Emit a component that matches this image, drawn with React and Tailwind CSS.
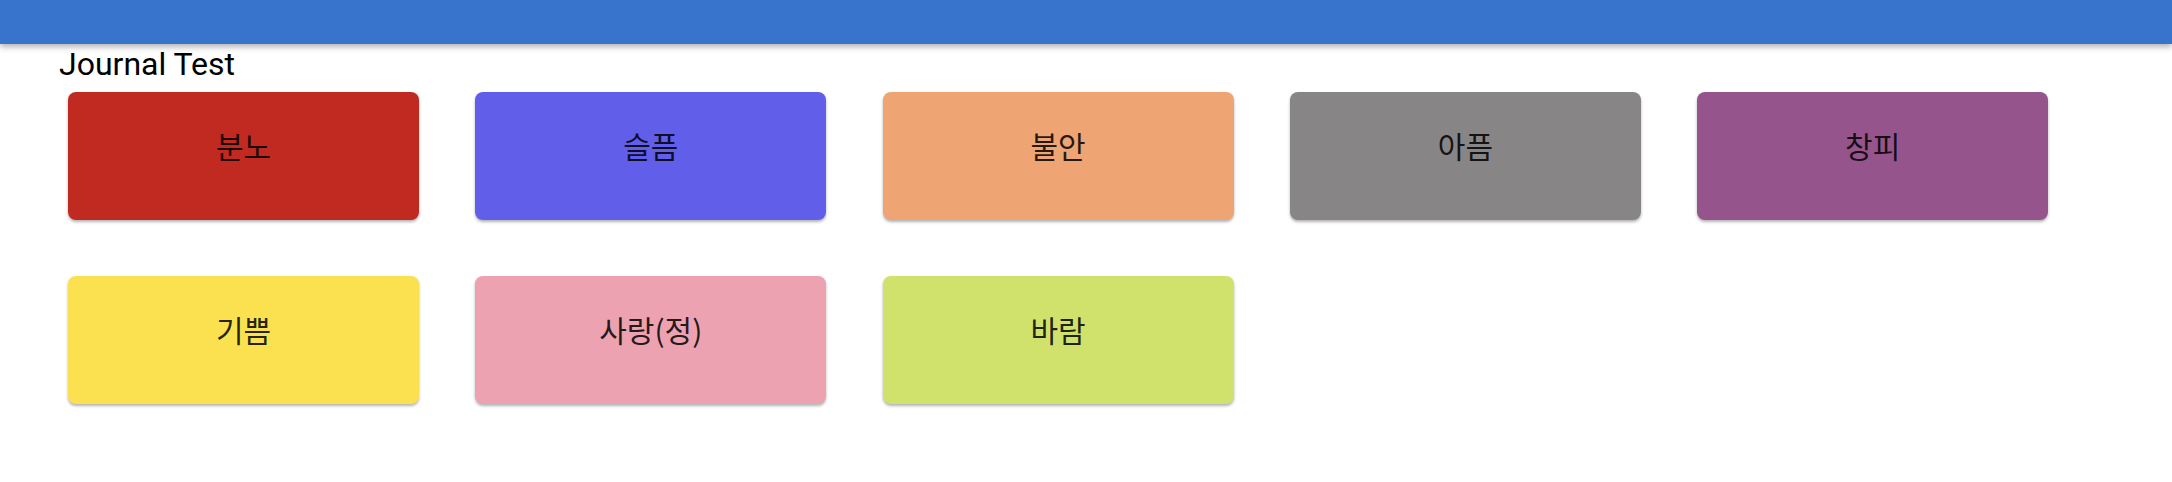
import React from 'react';

const emotions = [
    { label: '분노', color: 'bg-[#c12a20]' },
    { label: '슬픔', color: 'bg-[#615eea]' },
    { label: '불안', color: 'bg-[#eea473]' },
    { label: '아픔', color: 'bg-[#878585]' },
    { label: '창피', color: 'bg-[#95558c]' },
    { label: '기쁨', color: 'bg-[#fbe14f]' },
    { label: '사랑(정)', color: 'bg-[#eca2b1]' },
    { label: '바람', color: 'bg-[#d0e16c]' },
];

const EmotionCard = ({ label, color }) => (
    <div
        className={`${color} w-[351px] h-[128px] rounded-lg shadow-[0_2px_3px_rgba(0,0,0,0.3)] flex justify-center pt-[38px]`}
    >
        <span className="text-[30px] leading-[30px] text-black/85">{label}</span>
    </div>
);

export default function App() {
    return (
        <div className="min-h-screen bg-white font-['Roboto','Noto_Sans_CJK_KR',sans-serif]">
            <header className="h-[44px] bg-[#3874cb] shadow-[0_3px_6px_rgba(0,0,0,0.3)]" />
            <h1 className="ml-[59px] mt-[4px] text-[32px] leading-[32px] text-black">Journal Test</h1>
            <div className="flex flex-wrap gap-x-[56.3px] gap-y-[56px] pl-[68px] pt-[12px] font-['Noto_Sans_CJK_KR',sans-serif]">
                {emotions.map((e) => (
                    <EmotionCard key={e.label} {...e} />
                ))}
            </div>
        </div>
    );
}
